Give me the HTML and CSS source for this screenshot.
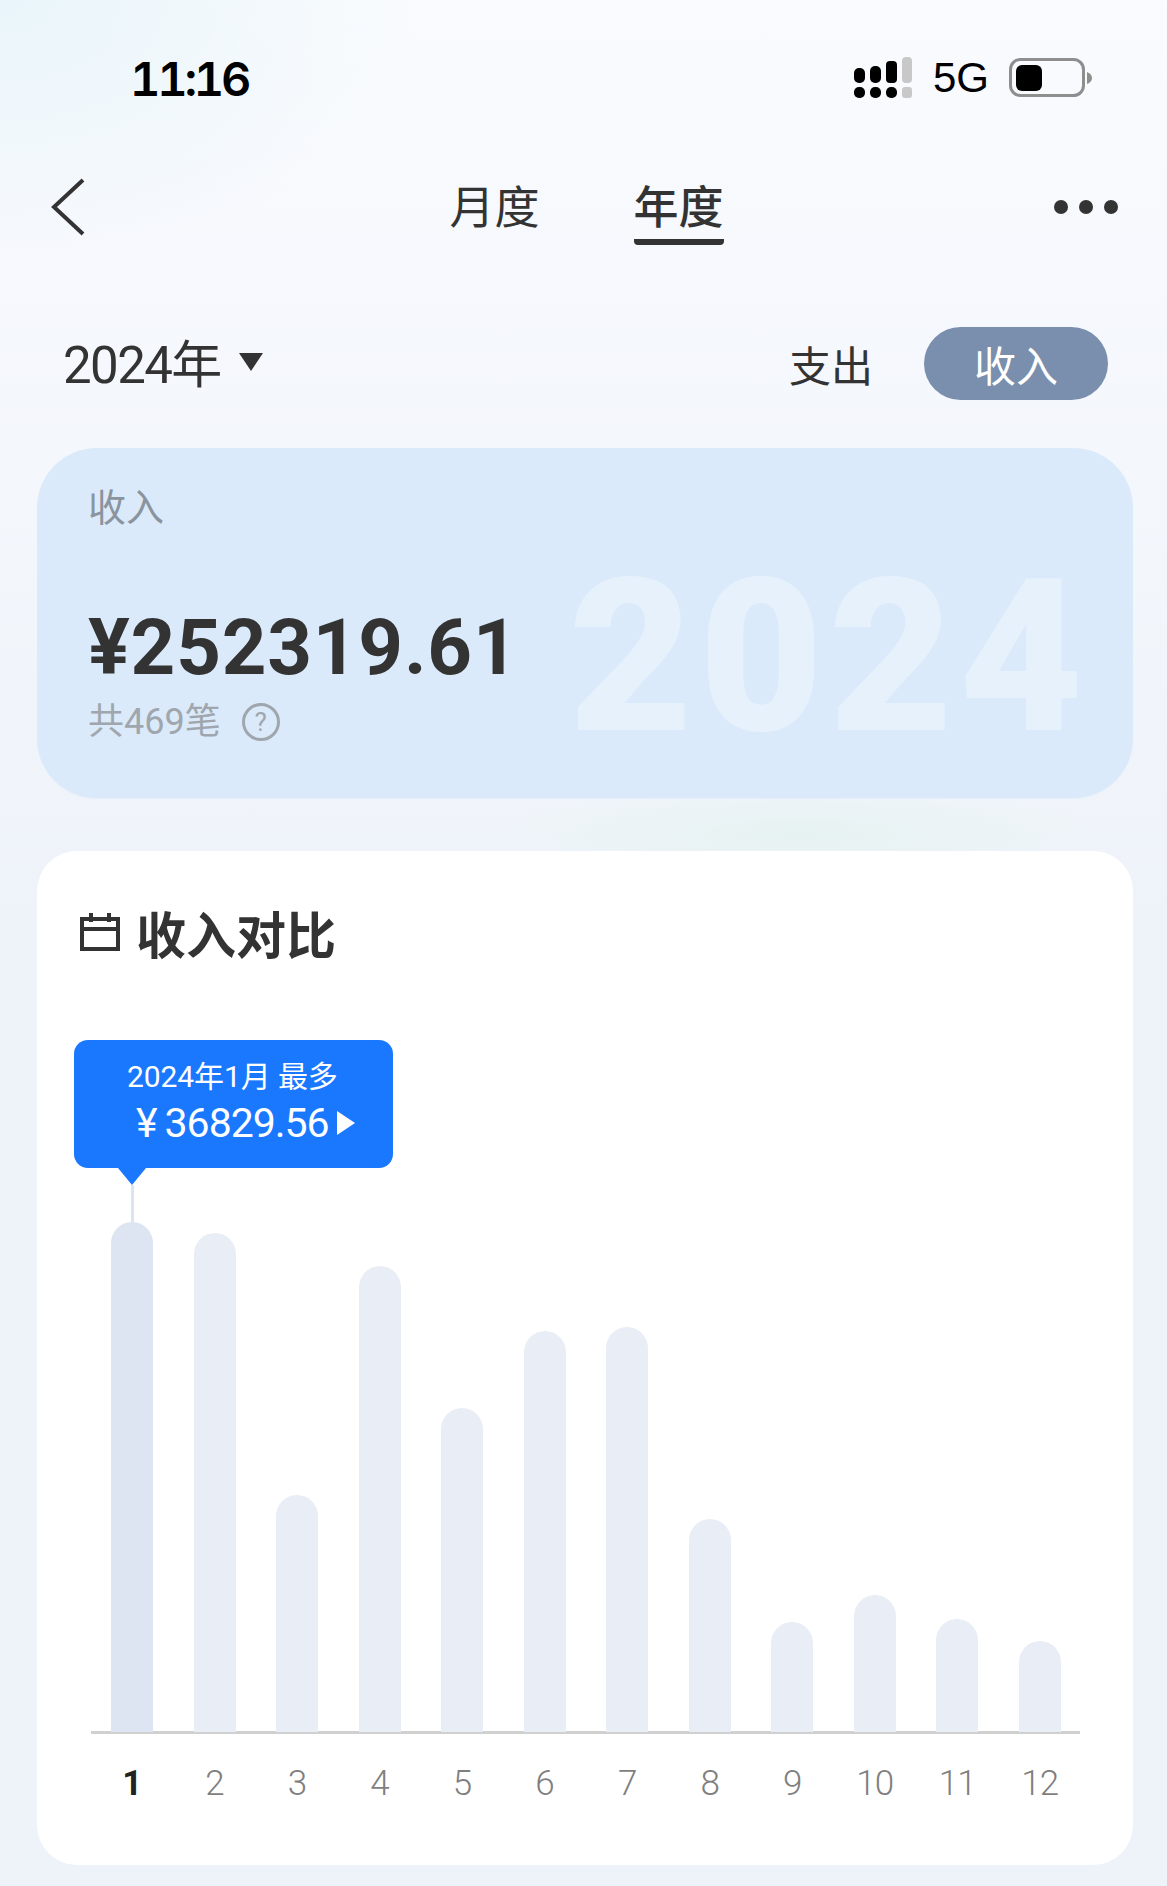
FILE: index.html
```html
<!DOCTYPE html>
<html lang="zh-CN">
<head>
<meta charset="utf-8">
<title>年度收入</title>
<link rel="stylesheet" href="styles.css">
</head>
<body>
<div class="page">
  <header class="status">
    <span class="clock">11:16</span>
    <div class="status-right">
      <svg class="signal" width="58" height="42" viewBox="0 0 58 42">
        <g fill="#000">
          <rect x="0" y="11" width="11" height="15" rx="5"/>
          <rect x="16" y="9" width="11" height="17" rx="5"/>
          <rect x="32" y="4" width="11" height="22" rx="4"/>
          <rect x="0" y="30" width="11" height="11" rx="5"/>
          <rect x="16" y="30" width="11" height="11" rx="5"/>
          <rect x="32" y="30" width="11" height="11" rx="5"/>
        </g>
        <g fill="#c8c8c8">
          <rect x="48" y="0" width="10" height="26" rx="4"/>
          <rect x="48" y="30" width="10" height="11" rx="3"/>
        </g>
      </svg>
      <span class="network">5G</span>
      <svg class="battery" width="84" height="40" viewBox="0 0 84 40">
        <rect x="1.5" y="1.5" width="73" height="36" rx="10" fill="none" stroke="#8e8e8e" stroke-width="3"/>
        <rect x="7" y="7" width="26" height="26" rx="6" fill="#000"/>
        <path d="M78 14 Q83 16 83 20 Q83 24 78 26 Z" fill="#8e8e8e"/>
      </svg>
    </div>
  </header>

  <nav class="nav">
    <svg class="back" width="36" height="58" viewBox="0 0 36 58">
      <path d="M33 2 L4 29 L33 56" fill="none" stroke="#333" stroke-width="4"/>
    </svg>
    <div class="tabs">
      <span class="tab">月度</span>
      <span class="tab tab-active">年度</span>
    </div>
    <div class="more"><i></i><i></i><i></i></div>
  </nav>

  <section class="filter">
    <div class="year">2024年<span class="caret"></span></div>
    <div class="switch">
      <span class="switch-off">支出</span>
      <span class="switch-on">收入</span>
    </div>
  </section>

  <section class="summary">
    <div class="watermark">2024</div>
    <div class="summary-label">收入</div>
    <div class="summary-amount">¥252319.61</div>
    <div class="summary-count">共469笔
      <span class="help">?</span>
    </div>
  </section>

  <section class="chart-card">
    <h2 class="chart-title">
      <svg width="40" height="40" viewBox="0 0 40 40">
        <path d="M2 7 H38 V37 H2 Z M2 17 H38 M11 1 V10 M29 1 V10" fill="none" stroke="#333" stroke-width="4"/>
      </svg>
      收入对比
    </h2>
    <div class="chart">
      <div class="tip">
        <div class="tip-date">2024年1月 最多</div>
        <div class="tip-value"><span class="tip-yen">¥</span>36829.56<span class="tip-arrow"></span></div>
      </div>
      <div class="tip-pointer"></div>
      <div class="tip-line"></div>
      <div class="bars">
        <div class="bar bar-peak" style="height:510px"></div>
        <div class="bar" style="height:499px"></div>
        <div class="bar" style="height:237px"></div>
        <div class="bar" style="height:466px"></div>
        <div class="bar" style="height:324px"></div>
        <div class="bar" style="height:401px"></div>
        <div class="bar" style="height:405px"></div>
        <div class="bar" style="height:213px"></div>
        <div class="bar" style="height:110px"></div>
        <div class="bar" style="height:137px"></div>
        <div class="bar" style="height:113px"></div>
        <div class="bar" style="height:91px"></div>
      </div>
      <div class="months">
        <span class="month-on">1</span><span>2</span><span>3</span><span>4</span><span>5</span><span>6</span><span>7</span><span>8</span><span>9</span><span>10</span><span>11</span><span>12</span>
      </div>
    </div>
  </section>
</div>
</body>
</html>
```

FILE: styles.css
```css
* { box-sizing: border-box; }

html, body {
  margin: 0;
  padding: 0;
}

body {
  font-family: "Liberation Sans", "Noto Sans CJK SC", sans-serif;
  color: #333;
}

.page {
  width: 1167px;
  height: 1886px;
  overflow: hidden;
  padding: 0 34px 0 37px;
  background:
    radial-gradient(420px 260px at 0 0, #e9f5fa 0%, rgba(233, 245, 250, 0) 100%),
    radial-gradient(300px 50px at 800px 835px, rgba(226, 241, 238, .7) 0%, rgba(226, 241, 238, 0) 100%),
    linear-gradient(180deg, #f9fbfe 0%, #f4f7fc 24%, #eef3f9 50%, #eef3f9 100%);
}

/* Status bar */
.status {
  height: 156px;
  margin: 0 -34px 0 -37px;
  padding: 0 74px 0 130px;
  display: flex;
  align-items: center;
  justify-content: space-between;
}

.clock {
  font-family: "Inter", sans-serif;
  font-size: 47px;
  font-weight: 600;
  font-variant-numeric: tabular-nums;
  letter-spacing: -3.2px;
  color: #000;
}

.status-right {
  display: flex;
  align-items: center;
}

.network {
  margin: 0 20px 0 21px;
  font-size: 42px;
  color: #000;
}

/* Navigation */
.nav {
  height: 102px;
  margin: 0 -34px 0 -37px;
  padding: 0 49px 0 50px;
  display: flex;
  align-items: center;
  justify-content: space-between;
}

.tabs {
  display: flex;
  gap: 94px;
  margin-left: 33px;
}

.tab {
  font-size: 45px;
  line-height: 58px;
  padding: 0 0 5px;
  font-family: "Noto Sans CJK SC", sans-serif;
}

.tab-active {
  font-weight: 500;
  border-bottom: 6px solid #333;
  border-radius: 0 0 4px 4px;
  margin-bottom: -6px;
}

.more {
  display: flex;
  gap: 11px;
}

.more i {
  width: 14px;
  height: 14px;
  border-radius: 50%;
  background: #333;
}

/* Year picker and type switch */
.filter {
  height: 73px;
  margin-top: 69px;
  padding: 0 25px 0 26px;
  display: flex;
  align-items: center;
  justify-content: space-between;
}

.year {
  display: flex;
  align-items: center;
  margin-top: -6px;
  font-size: 51px;
  letter-spacing: -1.6px;
  font-family: "Roboto", "Noto Sans CJK SC", sans-serif;
}

.caret {
  width: 0;
  height: 0;
  margin: 2px 0 0 18px;
  border-style: solid;
  border-width: 18px 12px 0;
  border-color: #333 transparent transparent;
}

.switch {
  display: flex;
  align-items: center;
  gap: 51px;
  font-family: "Noto Sans CJK SC", sans-serif;
  font-size: 42px;
}

.switch-on {
  width: 184px;
  height: 73px;
  line-height: 73px;
  text-align: center;
  border-radius: 37px;
  color: #fff;
  background: #7a8fad;
}

/* Yearly total */
.summary {
  position: relative;
  height: 351px;
  margin-top: 48px;
  padding: 30px 0 0 51px;
  border-radius: 60px;
  background: #dbeafa;
  overflow: hidden;
  border-bottom: 1px solid #e6eef8;
}

.watermark {
  position: absolute;
  right: 44px;
  top: 84px;
  font-family: "Roboto", sans-serif;
  font-size: 214px;
  line-height: 250px;
  font-weight: 900;
  letter-spacing: 6px;
  color: #e6f1fc;
}

.summary-label {
  position: relative;
  font-family: "Noto Sans CJK SC", sans-serif;
  font-size: 38px;
  line-height: 54px;
  color: #8a949e;
}

.summary-amount {
  position: relative;
  margin-top: 71px;
  font-family: "Roboto", sans-serif;
  font-size: 78px;
  line-height: 90px;
  font-weight: 700;
  letter-spacing: 0.8px;
}

.summary-count {
  position: relative;
  display: flex;
  align-items: center;
  gap: 21px;
  margin-top: 5px;
  font-family: "Roboto", "Noto Sans CJK SC", sans-serif;
  font-size: 36px;
  line-height: 48px;
  color: #a0a6ad;
}

.help {
  width: 38px;
  height: 38px;
  line-height: 33px;
  text-align: center;
  font-size: 26px;
  border: 3px solid #a0a6ad;
  border-radius: 50%;
}

/* Monthly comparison */
.chart-card {
  height: 1014px;
  margin-top: 52px;
  padding: 0;
  border-radius: 40px;
  background: #fff;
}

.chart-title {
  display: flex;
  align-items: center;
  gap: 16px;
  margin: 0;
  padding: 49px 0 0 43px;
  height: 112px;
  font-family: "Noto Sans CJK SC", sans-serif;
  font-size: 50px;
  line-height: 60px;
  font-weight: 700;
}

.chart {
  position: relative;
  height: 902px;
}

.tip {
  position: absolute;
  left: 37px;
  top: 77px;
  width: 319px;
  height: 128px;
  padding: 19px 0 0 53px;
  border-radius: 14px;
  background: #1a78ff;
  color: #fff;
}

.tip-date {
  font-family: "Roboto", "Noto Sans CJK SC", sans-serif;
  font-size: 30px;
  line-height: 36px;
  letter-spacing: -0.1px;
}

.tip-value {
  display: flex;
  align-items: center;
  margin-top: 3px;
  margin-left: 9px;
  font-family: "Roboto", sans-serif;
  font-size: 41px;
  line-height: 50px;
  letter-spacing: -1px;
}

.tip-yen {
  margin-right: 8px;
}

.tip-arrow {
  margin-left: 8px;
  border-style: solid;
  border-width: 12px 0 12px 18px;
  border-color: transparent transparent transparent #fff;
}

.tip-pointer {
  position: absolute;
  left: 81px;
  top: 205px;
  border-style: solid;
  border-width: 17px 14px 0;
  border-color: #1a78ff transparent transparent;
}

.tip-line {
  position: absolute;
  left: 94px;
  top: 222px;
  width: 3px;
  height: 40px;
  background: #dbe4f0;
}

.bars {
  position: absolute;
  left: 54px;
  right: 53px;
  top: 259px;
  height: 512px;
  padding: 0 19px 0 20px;
  display: flex;
  align-items: flex-end;
  justify-content: space-between;
  border-bottom: 3px solid #d0d0d0;
}

.bar {
  width: 42px;
  margin-bottom: -1px;
  border-radius: 21px 21px 0 0;
  background: #e9edf5;
}

.bar-peak {
  background: #dde5f2;
}

.months {
  position: absolute;
  left: 74px;
  right: 72px;
  top: 801px;
  display: flex;
  justify-content: space-between;
  font-family: "Roboto", sans-serif;
  font-size: 35px;
  font-weight: 300;
  line-height: 40px;
  letter-spacing: -0.8px;
  color: #7f7f7f;
}

.months span {
  width: 42px;
  white-space: nowrap;
  display: flex;
  justify-content: center;
}

.months .month-on {
  color: #222;
  font-weight: 700;
}
```
